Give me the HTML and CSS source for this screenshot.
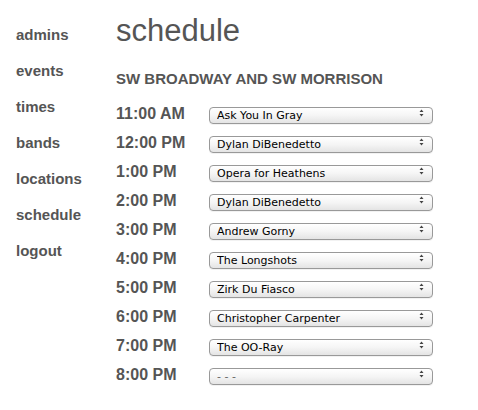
FILE: index.html
```html
<!DOCTYPE html>
<html>
<head>
<meta charset="utf-8">
<link rel="stylesheet" href="styles.css">
</head>
<body>
<div class="page">
  <nav class="nav">
    <a href="#">admins</a>
    <a href="#">events</a>
    <a href="#">times</a>
    <a href="#">bands</a>
    <a href="#">locations</a>
    <a href="#">schedule</a>
    <a href="#">logout</a>
  </nav>
  <main class="main">
    <h1 class="title">schedule</h1>
    <h2 class="subtitle">SW BROADWAY AND SW MORRISON</h2>
    <div class="rows">
      <div class="row"><span class="time">11:00 AM</span><span class="sel"><select><option>Ask You In Gray</option></select><svg class="arr" width="5" height="8" viewBox="0 0 5 8"><path d="M0.5 3L2.5 0.5L4.5 3ZM0.5 5L2.5 7.5L4.5 5Z" fill="#444"/></svg></span></div>
      <div class="row"><span class="time">12:00 PM</span><span class="sel"><select><option>Dylan DiBenedetto</option></select><svg class="arr" width="5" height="8" viewBox="0 0 5 8"><path d="M0.5 3L2.5 0.5L4.5 3ZM0.5 5L2.5 7.5L4.5 5Z" fill="#444"/></svg></span></div>
      <div class="row"><span class="time">1:00 PM</span><span class="sel"><select><option>Opera for Heathens</option></select><svg class="arr" width="5" height="8" viewBox="0 0 5 8"><path d="M0.5 3L2.5 0.5L4.5 3ZM0.5 5L2.5 7.5L4.5 5Z" fill="#444"/></svg></span></div>
      <div class="row"><span class="time">2:00 PM</span><span class="sel"><select><option>Dylan DiBenedetto</option></select><svg class="arr" width="5" height="8" viewBox="0 0 5 8"><path d="M0.5 3L2.5 0.5L4.5 3ZM0.5 5L2.5 7.5L4.5 5Z" fill="#444"/></svg></span></div>
      <div class="row"><span class="time">3:00 PM</span><span class="sel"><select><option>Andrew Gorny</option></select><svg class="arr" width="5" height="8" viewBox="0 0 5 8"><path d="M0.5 3L2.5 0.5L4.5 3ZM0.5 5L2.5 7.5L4.5 5Z" fill="#444"/></svg></span></div>
      <div class="row"><span class="time">4:00 PM</span><span class="sel"><select><option>The Longshots</option></select><svg class="arr" width="5" height="8" viewBox="0 0 5 8"><path d="M0.5 3L2.5 0.5L4.5 3ZM0.5 5L2.5 7.5L4.5 5Z" fill="#444"/></svg></span></div>
      <div class="row"><span class="time">5:00 PM</span><span class="sel"><select><option>Zirk Du Fiasco</option></select><svg class="arr" width="5" height="8" viewBox="0 0 5 8"><path d="M0.5 3L2.5 0.5L4.5 3ZM0.5 5L2.5 7.5L4.5 5Z" fill="#444"/></svg></span></div>
      <div class="row"><span class="time">6:00 PM</span><span class="sel"><select><option>Christopher Carpenter</option></select><svg class="arr" width="5" height="8" viewBox="0 0 5 8"><path d="M0.5 3L2.5 0.5L4.5 3ZM0.5 5L2.5 7.5L4.5 5Z" fill="#444"/></svg></span></div>
      <div class="row"><span class="time">7:00 PM</span><span class="sel"><select><option>The OO-Ray</option></select><svg class="arr" width="5" height="8" viewBox="0 0 5 8"><path d="M0.5 3L2.5 0.5L4.5 3ZM0.5 5L2.5 7.5L4.5 5Z" fill="#444"/></svg></span></div>
      <div class="row"><span class="time">8:00 PM</span><span class="sel"><select class="empty"><option>- - -</option></select><svg class="arr" width="5" height="8" viewBox="0 0 5 8"><path d="M0.5 3L2.5 0.5L4.5 3ZM0.5 5L2.5 7.5L4.5 5Z" fill="#444"/></svg></span></div>
    </div>
  </main>
</div>
</body>
</html>
```

FILE: styles.css
```css
html, body {
  margin: 0;
  padding: 0;
  background: #fff;
}

body {
  font-family: "Liberation Sans", Arial, Helvetica, sans-serif;
  color: #555;
}

.page {
  display: flex;
  padding-left: 16px;
}

.nav {
  width: 100px;
  display: flex;
  flex-direction: column;
  padding-top: 17px;
}

.nav a {
  font-size: 15px;
  font-weight: bold;
  line-height: 36px;
  color: #555;
  text-decoration: none;
}

.main {
  display: flex;
  flex-direction: column;
}

.title {
  margin: 11px 0 0 0;
  font-size: 31px;
  font-weight: normal;
  line-height: 40px;
  color: #555;
}

.subtitle {
  margin: 18px 0 0 0;
  font-size: 15px;
  font-weight: bold;
  line-height: 20px;
  color: #555;
}

.rows {
  margin-top: 10px;
  display: flex;
  flex-direction: column;
}

.row {
  display: flex;
  align-items: center;
  height: 29px;
}

.time {
  width: 93px;
  font-size: 16px;
  font-weight: bold;
  color: #555;
}

.sel {
  position: relative;
  display: block;
  width: 224px;
  height: 17px;
}

.sel select {
  -webkit-appearance: none;
  appearance: none;
  box-sizing: border-box;
  width: 224px;
  height: 17px;
  margin: 0;
  padding: 0 0 0 7px;
  border: 1px solid #999;
  border-radius: 4px;
  background: linear-gradient(#ffffff, #f5f5f5 50%, #e4e4e4);
  font-family: "DejaVu Sans", sans-serif;
  font-size: 11px;
  line-height: 15px;
  color: #000;
  box-shadow: 0 1px 0 rgba(0,0,0,0.05);
}

.sel select.empty {
  color: #666;
}

.arr {
  position: absolute;
  right: 9px;
  top: 4px;
}
```
